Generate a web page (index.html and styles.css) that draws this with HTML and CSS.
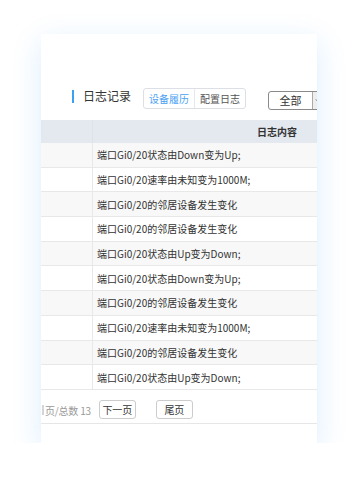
FILE: index.html
```html
<!DOCTYPE html>
<html lang="zh-CN">
<head>
<meta charset="utf-8">
<link rel="stylesheet" href="styles.css">
</head>
<body>
<div class="stage">
  <div class="card">
    <div class="toolbar">
      <div class="title"><span class="title-bar"></span><span class="title-text">日志记录</span></div>
      <div class="tabs">
        <span class="tab active">设备履历</span>
        <span class="tab">配置日志</span>
      </div>
      <div class="select">
        <span class="select-value">全部</span>
        <span class="select-arrow"><svg width="8" height="6" viewBox="0 0 8 6"><path d="M1 1.5 L4 4.5 L7 1.5" fill="none" stroke="#666" stroke-width="1"/></svg></span>
      </div>
    </div>
    <div class="table">
      <div class="row head"><div class="c1"></div><div class="c2">日志内容</div></div>
      <div class="row"><div class="c1"></div><div class="c2">端口Gi0/20状态由Down变为Up;</div></div>
      <div class="row"><div class="c1"></div><div class="c2">端口Gi0/20速率由未知变为1000M;</div></div>
      <div class="row"><div class="c1"></div><div class="c2">端口Gi0/20的邻居设备发生变化</div></div>
      <div class="row"><div class="c1"></div><div class="c2">端口Gi0/20的邻居设备发生变化</div></div>
      <div class="row"><div class="c1"></div><div class="c2">端口Gi0/20状态由Up变为Down;</div></div>
      <div class="row"><div class="c1"></div><div class="c2">端口Gi0/20状态由Down变为Up;</div></div>
      <div class="row"><div class="c1"></div><div class="c2">端口Gi0/20的邻居设备发生变化</div></div>
      <div class="row"><div class="c1"></div><div class="c2">端口Gi0/20速率由未知变为1000M;</div></div>
      <div class="row"><div class="c1"></div><div class="c2">端口Gi0/20的邻居设备发生变化</div></div>
      <div class="row"><div class="c1"></div><div class="c2">端口Gi0/20状态由Up变为Down;</div></div>
    </div>
    <div class="pager">
      <span class="input-edge"></span>
      <span class="pager-info">页/总数 13</span>
      <span class="btn">下一页</span>
      <span class="btn">尾页</span>
    </div>
  </div>
</div>
</body>
</html>
```
FILE: styles.css
```css
html, body {
  margin: 0;
  padding: 0;
  background: #ffffff;
  font-family: "Noto Sans CJK SC", "Noto Sans", sans-serif;
}
.stage {
  padding: 34px 0 0 41px;
}
.card {
  width: 276px;
  height: 409px;
  background: #ffffff;
  overflow: hidden;
  box-shadow: 0 8px 28px rgba(40, 140, 240, 0.16);
}
.toolbar {
  display: flex;
  align-items: flex-start;
  padding: 54px 0 0 31px;
  height: 22px;
}
.title {
  display: flex;
  align-items: center;
  height: 16px;
  flex-shrink: 0;
}
.title-bar {
  width: 2px;
  height: 13px;
  background: #3d9ff0;
  margin-right: 9px;
}
.title-text {
  font-size: 12px;
  line-height: 16px;
  color: #333;
}
.tabs {
  display: flex;
  margin-left: 12px;
  border: 1px solid #dcdfe6;
  border-radius: 3px;
  height: 19px;
  flex-shrink: 0;
}
.tab {
  width: 50px;
  font-size: 10px;
  line-height: 19px;
  text-align: center;
  color: #555;
}
.tab + .tab {
  border-left: 1px solid #e4e7ed;
}
.tab.active {
  color: #4a9ff5;
}
.select {
  display: flex;
  margin: 3px 0 0 22px;
  border: 1px solid #8a8a8a;
  border-radius: 3px;
  height: 17px;
  flex-shrink: 0;
}
.select-value {
  width: 43px;
  font-size: 11px;
  line-height: 17px;
  text-align: center;
  color: #333;
}
.select-arrow {
  width: 14px;
  border-left: 1px solid #aaa;
  background: #eeeeee;
  display: flex;
  align-items: center;
  justify-content: flex-start;
  padding-left: 2px;
}
.table {
  margin-top: 10px;
  width: 420px;
}
.row {
  display: flex;
  height: 23.7px;
  border-bottom: 1px solid #e8e8e8;
  font-size: 10px;
  color: #333;
}
.row:nth-child(even) {
  background: #f8f8f8;
}
.row:nth-child(odd) {
  background: #ffffff;
}
.row.head {
  background: #e3e9ef;
  border-bottom: none;
  height: 23px;
  font-weight: bold;
}
.c1 {
  width: 51px;
  border-right: 1px solid #e8e8e8;
}
.head .c1 {
  border-right-color: #dde3ea;
}
.c2 {
  flex: 1;
  padding-left: 4px;
  display: flex;
  align-items: center;
  white-space: nowrap;
}
.head .c2 {
  justify-content: center;
  padding-left: 0;
}
.pager {
  display: flex;
  align-items: center;
  height: 34px;
  border-bottom: 1px solid #e6e6e6;
  width: 276px;
  box-sizing: border-box;
}
.input-edge {
  width: 2px;
  height: 10px;
  background: #d5d5d5;
  margin-left: 1px;
  margin-top: 8px;
}
.pager-info {
  margin-left: 1px;
  font-size: 10px;
  color: #999;
  margin-top: 8px;
  letter-spacing: -0.2px;
}
.btn {
  margin-top: 7px;
  height: 17px;
  width: 35px;
  border: 1px solid #ccc;
  border-radius: 3px;
  font-size: 10px;
  line-height: 17px;
  text-align: center;
  color: #333;
  margin-left: 8px;
}
.btn + .btn {
  margin-left: 20px;
}
```
